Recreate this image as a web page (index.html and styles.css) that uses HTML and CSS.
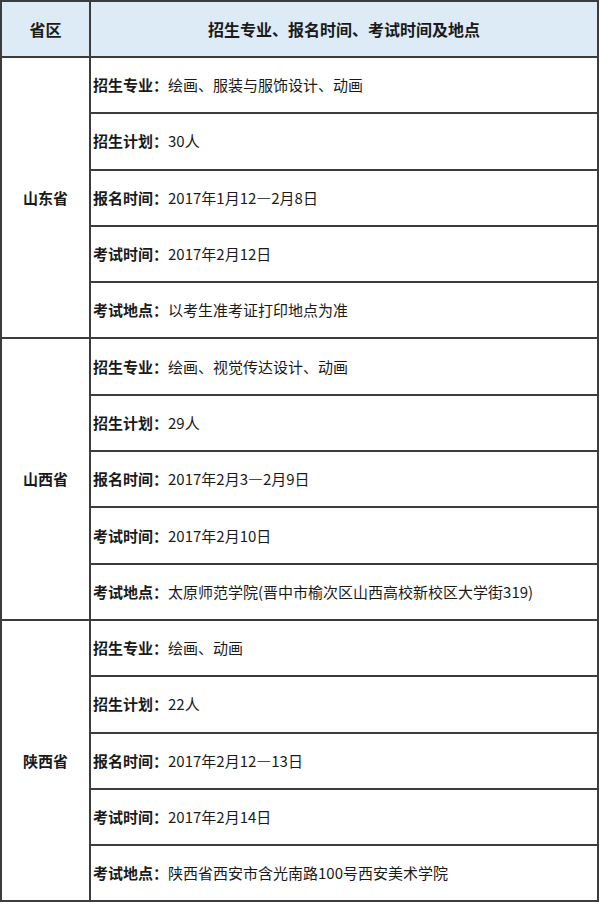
FILE: index.html
```html
<!DOCTYPE html>
<html lang="zh-CN">
<head>
<meta charset="utf-8">
<title>招生信息</title>
<link rel="stylesheet" href="styles.css">
</head>
<body>
<table class="info">
  <colgroup><col class="c-prov"><col class="c-detail"></colgroup>
  <thead>
    <tr class="head-row"><th>省区</th><th>招生专业、报名时间、考试时间及地点</th></tr>
  </thead>
  <tbody>
    <tr><td class="prov" rowspan="5">山东省</td><td><b>招生专业：</b>绘画、服装与服饰设计、动画</td></tr>
    <tr><td><b>招生计划：</b>30人</td></tr>
    <tr><td><b>报名时间：</b>2017年1月12—2月8日</td></tr>
    <tr><td><b>考试时间：</b>2017年2月12日</td></tr>
    <tr><td><b>考试地点：</b>以考生准考证打印地点为准</td></tr>
    <tr><td class="prov" rowspan="5">山西省</td><td><b>招生专业：</b>绘画、视觉传达设计、动画</td></tr>
    <tr><td><b>招生计划：</b>29人</td></tr>
    <tr><td><b>报名时间：</b>2017年2月3—2月9日</td></tr>
    <tr><td><b>考试时间：</b>2017年2月10日</td></tr>
    <tr><td><b>考试地点：</b>太原师范学院(晋中市榆次区山西高校新校区大学街319)</td></tr>
    <tr><td class="prov" rowspan="5">陕西省</td><td><b>招生专业：</b>绘画、动画</td></tr>
    <tr><td><b>招生计划：</b>22人</td></tr>
    <tr><td><b>报名时间：</b>2017年2月12—13日</td></tr>
    <tr><td><b>考试时间：</b>2017年2月14日</td></tr>
    <tr><td><b>考试地点：</b>陕西省西安市含光南路100号西安美术学院</td></tr>
  </tbody>
</table>
</body>
</html>
```
FILE: styles.css
```css
html, body {
  margin: 0;
  padding: 0;
  background: #ffffff;
}
body {
  font-family: "Noto Sans CJK SC", "Noto Sans", sans-serif;
  color: #1a1a1a;
}
.info {
  border-collapse: collapse;
  table-layout: fixed;
  width: 597px;
  margin: 0;
}
.c-prov { width: 89px; }
.c-detail { width: 508px; }
.info th, .info td {
  border: 2px solid #3c3c3c;
  padding: 0 2px;
  vertical-align: middle;
  font-size: 15px;
  line-height: 20px;
  white-space: nowrap;
}
.head-row th {
  background: #ddebf7;
  font-size: 16px;
  font-weight: bold;
  text-align: center;
  height: 56px;
  box-sizing: border-box;
}
.info tbody tr { height: 56.3px; }
.info td b { font-weight: bold; }
.info td.prov {
  text-align: center;
  font-weight: bold;
}
```
